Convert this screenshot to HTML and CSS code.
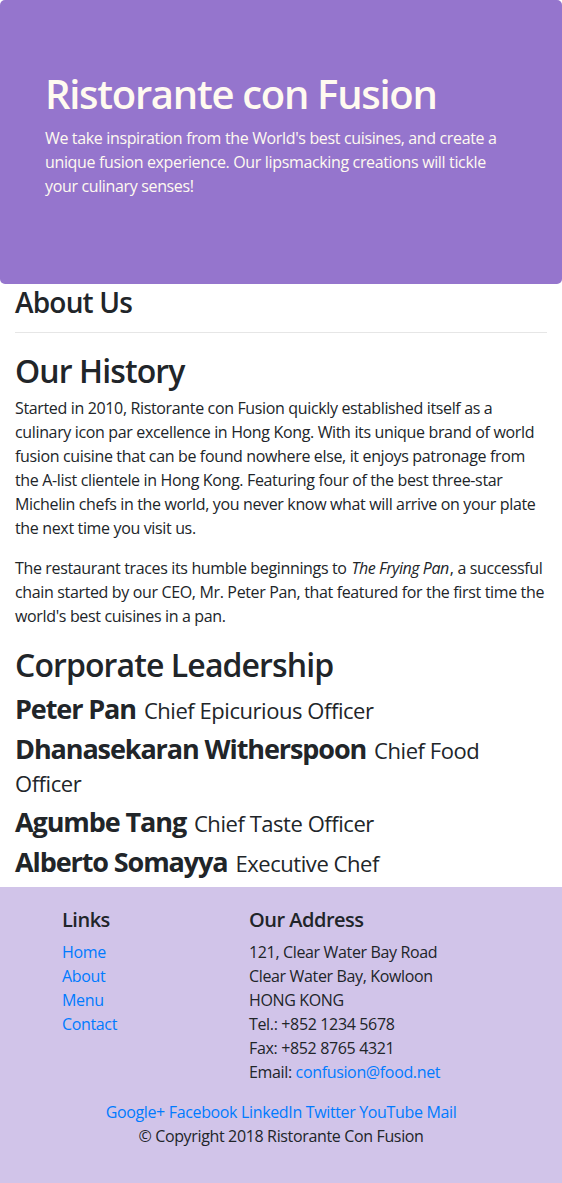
FILE: index.html
```
<!DOCTYPE html>
<html lang="en">
<head>
<meta charset="utf-8">
<title>Ristorante con Fusion: About Us</title>
<link rel="stylesheet" href="styles.css">
</head>
<body>
<header class="jumbotron">
  <div class="jumbotron-inner">
    <h1 class="jumbotron-title">Ristorante con Fusion</h1>
    <p class="jumbotron-text">We take inspiration from the World's best cuisines, and create a unique fusion experience. Our lipsmacking creations will tickle your culinary senses!</p>
  </div>
</header>

<main class="content">
  <h3 class="page-title">About Us</h3>
  <hr class="divider">

  <h2 class="section-title">Our History</h2>
  <p class="text">Started in 2010, Ristorante con Fusion quickly established itself as a culinary icon par excellence in Hong Kong. With its unique brand of world fusion cuisine that can be found nowhere else, it enjoys patronage from the A-list clientele in Hong Kong. Featuring four of the best three-star Michelin chefs in the world, you never know what will arrive on your plate the next time you visit us.</p>
  <p class="text">The restaurant traces its humble beginnings to <em class="book">The Frying Pan</em>, a successful chain started by our CEO, Mr. Peter Pan, that featured for the first time the world's best cuisines in a pan.</p>

  <h2 class="section-title section-leaders">Corporate Leadership</h2>
  <h3 class="leader">Peter Pan <small class="leader-role">Chief Epicurious Officer</small></h3>
  <h3 class="leader">Dhanasekaran Witherspoon <small class="leader-role">Chief Food Officer</small></h3>
  <h3 class="leader">Agumbe Tang <small class="leader-role">Chief Taste Officer</small></h3>
  <h3 class="leader leader-last">Alberto Somayya <small class="leader-role">Executive Chef</small></h3>
</main>

<footer class="footer">
  <div class="footer-cols">
    <div class="footer-links">
      <h5 class="footer-title">Links</h5>
      <ul class="link-list">
        <li><a href="#">Home</a></li>
        <li><a href="#">About</a></li>
        <li><a href="#">Menu</a></li>
        <li><a href="#">Contact</a></li>
      </ul>
    </div>
    <div class="footer-address">
      <h5 class="footer-title">Our Address</h5>
      <address class="address">
        121, Clear Water Bay Road<br>
        Clear Water Bay, Kowloon<br>
        HONG KONG<br>
        Tel.: +852 1234 5678<br>
        Fax: +852 8765 4321<br>
        Email: <a href="#">confusion@food.net</a>
      </address>
    </div>
  </div>
  <div class="social">
    <a href="#">Google+</a>
    <a href="#">Facebook</a>
    <a href="#">LinkedIn</a>
    <a href="#">Twitter</a>
    <a href="#">YouTube</a>
    <a href="#">Mail</a>
  </div>
  <p class="copyright">© Copyright 2018 Ristorante Con Fusion</p>
</footer>
</body>
</html>
```

FILE: styles.css
```
* { box-sizing: border-box; }

body {
  margin: 0;
  font-family: "Segoe UI", "Open Sans", "Liberation Sans", sans-serif;
  font-size: 16px;
  line-height: 24px;
  color: #212529;
  background: #fff;
  letter-spacing: -0.35px;
}

a { color: #007bff; text-decoration: none; }

h1, h2, h3, h5 {
  margin: 0;
  font-weight: 600;
  line-height: 1.2;
  letter-spacing: -0.6px;
}

.jumbotron {
  background: #9575cd;
  color: #fffaf0;
  border-radius: 5px;
  padding: 70px 45px 70px;
}

.jumbotron-inner { max-width: 472px; }

.jumbotron-title {
  font-size: 40px;
  line-height: 48px;
  margin-bottom: 8px;
  letter-spacing: -1.3px;
}

.jumbotron-text { margin: 0 0 16px; }

.content { padding: 0 15px; }

.page-title {
  font-size: 28px;
  line-height: 34px;
  padding-top: 1px;
  margin-bottom: 0;
  letter-spacing: -0.8px;
}

.divider {
  border: 0;
  border-top: 1px solid #e6e6e6;
  margin: 13px 0 19px;
}

.section-title {
  font-size: 32px;
  line-height: 38px;
  margin-bottom: 6px;
  letter-spacing: -0.9px;
}

.section-leaders {
  margin-top: 18px;
  margin-bottom: 8px;
}

.text { margin: 0 0 16px; }

.book {
  letter-spacing: -0.45px;
  margin: 0 1px;
}

.leader {
  font-size: 27px;
  line-height: 33px;
  font-weight: 700;
  margin-bottom: 7px;
  letter-spacing: -1.1px;
}

.leader-last { margin-bottom: 9px; }

.leader-role {
  font-size: 22px;
  font-weight: 400;
  line-height: 20px;
  letter-spacing: -0.45px;
  margin-left: 2px;
}

.footer {
  background: #d1c4e9;
  padding: 21px 0 19px;
}

.footer-cols {
  display: flex;
  padding-left: 62px;
}

.footer-links { width: 187px; }

.footer-title {
  font-size: 20px;
  line-height: 24px;
  margin-bottom: 8px;
  letter-spacing: -0.5px;
}

.link-list {
  list-style: none;
  margin: 0;
  padding: 0;
}

.address {
  font-style: normal;
  margin: 0 0 16px;
}

.social {
  text-align: center;
}

.copyright {
  text-align: center;
  margin: 0 0 16px;
}
```
